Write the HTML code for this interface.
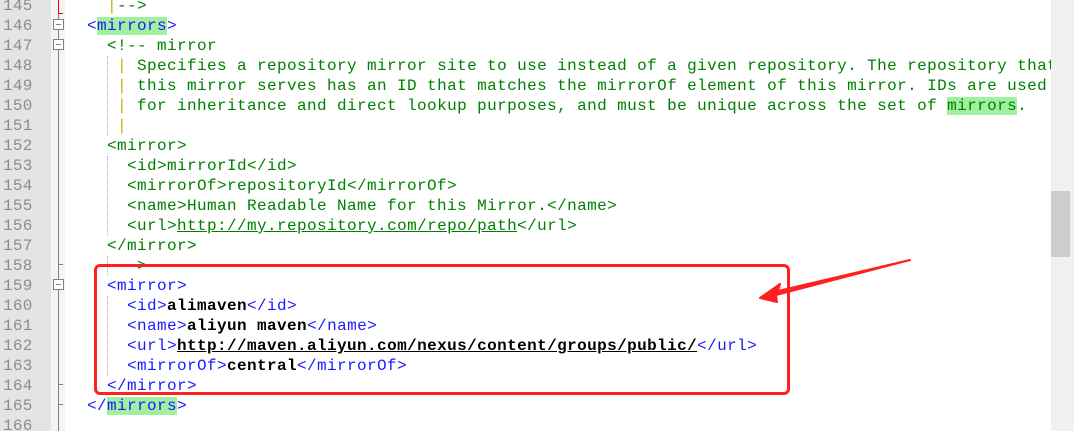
<!DOCTYPE html>
<html><head><meta charset="utf-8"><style>
body{margin:0;width:1074px;height:431px;overflow:hidden;background:#fff;position:relative;font-family:"Liberation Mono",monospace;}
.g{position:absolute;left:0;top:0;width:51px;height:431px;background:#e4e4e4;}
.f{position:absolute;left:51px;top:0;width:14px;height:431px;background:#f4f4f4;}
.fl{position:absolute;left:58px;top:0;width:1px;height:431px;background:#808080;}
.ln{position:absolute;left:3px;font-size:16px;line-height:20px;color:#8c8c8c;letter-spacing:0.3px;}
.c{position:absolute;left:67px;font-size:16px;line-height:20px;white-space:pre;letter-spacing:0.4px;color:#000;}
.t{color:#1a1aff}.gr{color:#008000}.y{color:#c8b400}.b{font-weight:bold}
.h{background:#a0f0a0}
.box{position:absolute;left:53px;width:9px;height:9px;border:1px solid #808080;background:#fff;}
.box:after{content:"";position:absolute;left:2px;top:4px;width:5px;height:1px;background:#808080}
.tick{position:absolute;left:58px;width:5px;height:1px;background:#808080}
.dot{position:absolute;width:0;border-left:1px dotted #b0b0b0}
</style></head><body>
<div class="g"></div><div class="f"></div><div class="fl"></div>
<div style="position:absolute;left:58px;top:0;width:1px;height:14px;background:#f00"></div>
<div style="position:absolute;left:58px;top:13px;width:5px;height:1px;background:#f00"></div>
<div class="box" style="top:19px"></div>
<div class="box" style="top:39px"></div>
<div class="box" style="top:279px"></div>
<div class="tick" style="top:264px"></div>
<div class="tick" style="top:384px"></div>
<div class="tick" style="top:404px"></div>
<div class="dot" style="left:107px;top:56px;height:80px"></div>
<div class="dot" style="left:107px;top:156px;height:80px"></div>
<div class="dot" style="left:107px;top:256px;height:20px"></div>
<div class="dot" style="left:107px;top:296px;height:80px"></div>
<div class="ln" style="top:-4px">145<br>146<br>147<br>148<br>149<br>150<br>151<br>152<br>153<br>154<br>155<br>156<br>157<br>158<br>159<br>160<br>161<br>162<br>163<br>164<br>165<br>166</div>
<div class="c" style="top:-4px"><span class="y">    |</span><span class="gr">--&gt;</span>
<span class="t">  &lt;<span class="h">mirrors</span>&gt;</span>
<span class="gr">    &lt;!-- mirror</span>
<span class="y">     |</span><span class="gr"> Specifies a repository mirror site to use instead of a given repository. The repository that</span>
<span class="y">     |</span><span class="gr"> this mirror serves has an ID that matches the mirrorOf element of this mirror. IDs are used</span>
<span class="y">     |</span><span class="gr"> for inheritance and direct lookup purposes, and must be unique across the set of <span class="h">mirrors</span>.</span>
<span class="y">     |</span>
<span class="gr">    &lt;mirror&gt;
      &lt;id&gt;mirrorId&lt;/id&gt;
      &lt;mirrorOf&gt;repositoryId&lt;/mirrorOf&gt;
      &lt;name&gt;Human Readable Name for this Mirror.&lt;/name&gt;
      &lt;url&gt;<u>http://my.repository.com/repo/path</u>&lt;/url&gt;
    &lt;/mirror&gt;
       &gt;</span>
<span class="t">    &lt;mirror&gt;</span>
<span class="t">      &lt;id&gt;</span><span class="b">alimaven</span><span class="t">&lt;/id&gt;</span>
<span class="t">      &lt;name&gt;</span><span class="b">aliyun maven</span><span class="t">&lt;/name&gt;</span>
<span class="t">      &lt;url&gt;</span><span class="b"><u>http://maven.aliyun.com/nexus/content/groups/public/</u></span><span class="t">&lt;/url&gt;</span>
<span class="t">      &lt;mirrorOf&gt;</span><span class="b">central</span><span class="t">&lt;/mirrorOf&gt;</span>
<span class="t">    &lt;/mirror&gt;</span>
<span class="t">  &lt;/<span class="h">mirrors</span>&gt;</span>
</div>
<div style="position:absolute;left:94px;top:264px;width:690px;height:125px;border:3px solid #ff2020;border-radius:6px"></div>
<svg style="position:absolute;left:0;top:0" width="1074" height="431"><polygon points="910,260 778,291 780,284 760,298 777,302 776,295 " fill="#ff2020" stroke="#ff2020" stroke-width="2" stroke-linejoin="round"/></svg>
<div style="position:absolute;left:1051px;top:0;width:23px;height:431px;background:#f0f0f0"></div>
<div style="position:absolute;left:1051px;top:191px;width:19px;height:66px;background:#cdcdcd"></div>
</body></html>
